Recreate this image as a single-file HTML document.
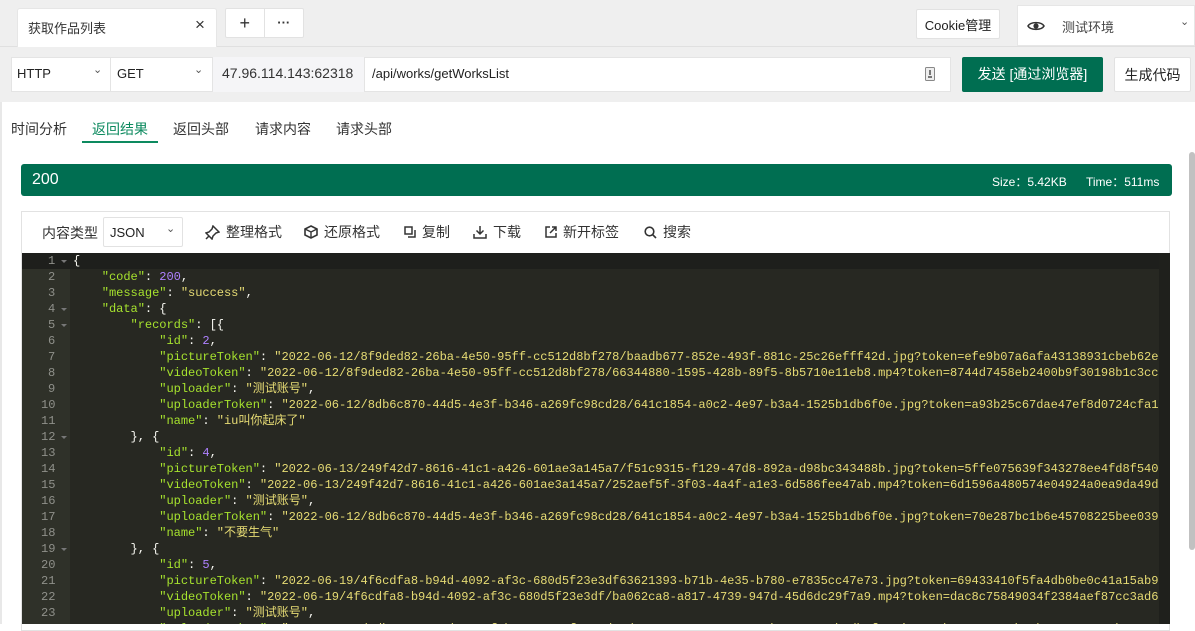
<!DOCTYPE html>
<html><head><meta charset="utf-8"><style>
*{box-sizing:border-box;margin:0;padding:0}
body{width:1195px;height:624px;overflow:hidden;background:#fff;font-family:"Liberation Sans","Noto Sans CJK SC",sans-serif;font-size:13px;color:#333;position:relative}
.abs{position:absolute}
.top{left:0;top:0;width:1195px;height:102px;background:#efefef}
.box{background:#fff;border:1px solid #e2e2e2;border-radius:2px;display:flex;align-items:center}
.code{left:22px;top:253px;width:1148px;height:371px;background:#272822;overflow:hidden;font-family:"Liberation Mono","Noto Sans CJK SC",monospace;font-size:12.08px}
.gut{position:absolute;left:0;top:0;width:48px;height:100%;background:#2f3129}
.ln{position:absolute;left:0;width:48px;height:16px;line-height:16px;color:#8f908a;text-align:left;padding-left:26px}
.ln.f::after{content:"";position:absolute;left:39px;top:7px;border:3px solid transparent;border-top:3px solid #777}
.tx{position:absolute;left:51px;height:16px;line-height:16px;white-space:pre;color:#f8f8f2;letter-spacing:-0.06px}
.k{color:#a6e22e}.s{color:#e6db74}.n{color:#ae81ff}
.tb{top:119px;font-size:14px;color:#333}
.ti{display:flex;align-items:center;gap:6px;font-size:14px;color:#333}
</style></head><body>
<div class="abs top"></div>
<div class="abs" style="left:0;top:46px;width:1195px;height:1px;background:#e0e0e0"></div>
<div class="abs" style="left:17px;top:8px;width:200px;height:39px;background:#fff;border:1px solid #e6e6e6;border-bottom:none;border-radius:3px 3px 0 0"></div>
<div class="abs" style="left:28px;top:18px;font-size:13px;color:#333">获取作品列表</div>
<div class="abs" style="left:195px;top:15px;font-size:17px;color:#333">×</div>
<div class="abs box" style="left:225px;top:8px;width:79px;height:30px"><div style="width:39px;text-align:center;font-size:18px;border-right:1px solid #e2e2e2;line-height:28px">+</div><div style="width:39px;text-align:center;font-weight:bold;line-height:24px">···</div></div>
<div class="abs box" style="left:916px;top:9px;width:84px;height:30px;justify-content:center;font-size:13px;color:#222">Cookie管理</div>
<div class="abs" style="left:1017px;top:5px;width:178px;height:41px;background:#fff;border:1px solid #e6e6e6"></div>
<svg class="abs" style="left:1027px;top:19px" width="18" height="14" viewBox="0 0 18 14"><path d="M1 7C3.5 2.5 14.5 2.5 17 7C14.5 11.5 3.5 11.5 1 7Z" fill="none" stroke="#333" stroke-width="1.6"/><circle cx="9" cy="7" r="2.6" fill="#333"/></svg>
<div class="abs" style="left:1062px;top:17px;font-size:13px;color:#444">测试环境</div>
<div class="abs" style="left:1180px;top:15px;font-size:11px;color:#555">⌄</div>
<div class="abs" style="left:11px;top:57px;width:940px;height:35px;background:#fff;border:1px solid #e4e4e4"></div>
<div class="abs" style="left:110px;top:57px;width:1px;height:35px;background:#e4e4e4"></div>
<div class="abs" style="left:212px;top:57px;width:153px;height:35px;background:#f5f5f7;border-left:1px solid #e4e4e4;border-right:1px solid #e4e4e4"></div>
<div class="abs" style="left:17px;top:66px;font-size:13px;color:#222">HTTP</div>
<div class="abs" style="left:93px;top:63px;font-size:11px;color:#555">⌄</div>
<div class="abs" style="left:117px;top:66px;font-size:13px;color:#222">GET</div>
<div class="abs" style="left:194px;top:63px;font-size:11px;color:#555">⌄</div>
<div class="abs" style="left:222px;top:65px;font-size:14px;color:#333">47.96.114.143:62318</div>
<div class="abs" style="left:372px;top:66px;font-size:13px;color:#222">/api/works/getWorksList</div>
<svg class="abs" style="left:925px;top:67px" width="10" height="14" viewBox="0 0 10 14"><rect x="0.5" y="0.5" width="9" height="13" rx="1" fill="#eee" stroke="#888"/><rect x="4" y="3" width="2" height="5" fill="#777"/><rect x="3" y="9" width="4" height="2" fill="#777"/></svg>
<div class="abs" style="left:962px;top:57px;width:141px;height:35px;background:#006e51;border-radius:2px;color:#fff;font-size:14px;line-height:35px;text-align:center">发送 [通过浏览器]</div>
<div class="abs box" style="left:1114px;top:57px;width:77px;height:35px;justify-content:center;font-size:14px;color:#222">生成代码</div>
<div class="abs" style="left:0;top:102px;width:2px;height:522px;background:#e8e8e8"></div>
<div class="abs tb" style="left:11px">时间分析</div>
<div class="abs tb" style="left:92px;color:#0d8a5f">返回结果</div>
<div class="abs" style="left:82px;top:141px;width:76px;height:2px;background:#0d8a5f"></div>
<div class="abs tb" style="left:173px">返回头部</div>
<div class="abs tb" style="left:255px">请求内容</div>
<div class="abs tb" style="left:336px">请求头部</div>
<div class="abs" style="left:1189px;top:152px;width:6px;height:398px;background:#c1c1c1;border-radius:3px"></div>
<div class="abs" style="left:21px;top:164px;width:1151px;height:32px;background:#006e51;border-radius:3px"></div>
<div class="abs" style="left:32px;top:171px;color:#fff;font-size:16px">200</div>
<div class="abs" style="left:992px;top:173px;color:#fff;font-size:12px">Size：5.42KB</div>
<div class="abs" style="left:1086px;top:173px;color:#fff;font-size:12px">Time：511ms</div>
<div class="abs" style="left:21px;top:211px;width:1149px;height:420px;border:1px solid #e2e2e2;background:#fff"></div>
<div class="abs" style="left:42px;top:223px;font-size:14px;color:#333">内容类型</div>
<div class="abs box" style="left:103px;top:217px;width:80px;height:30px;padding-left:6px;font-size:13px;color:#222">JSON<span style="position:absolute;left:62px;top:4px;font-size:11px;color:#555">⌄</span></div>
<div class="abs ti" style="left:205px;top:222px"><svg width="15" height="15" viewBox="0 0 15 15"><path d="M8 1L14 7L11 8L8 11L7 14L1 8L4 7L7 4Z" fill="none" stroke="#333" stroke-width="1.5"/><path d="M4 11L1 14" stroke="#333" stroke-width="1.5"/></svg>整理格式</div>
<div class="abs ti" style="left:304px;top:222px"><svg width="14" height="14" viewBox="0 0 14 14"><path d="M7 1L13 4V10L7 13L1 10V4Z" fill="none" stroke="#333" stroke-width="1.6"/><path d="M1 4L7 7L13 4M7 7V13" fill="none" stroke="#333" stroke-width="1.4"/></svg>还原格式</div>
<div class="abs ti" style="left:404px;top:222px"><svg width="12" height="12" viewBox="0 0 12 12"><rect x="1" y="1" width="7" height="7" fill="none" stroke="#333" stroke-width="1.5"/><path d="M4 11H11V4" fill="none" stroke="#333" stroke-width="1.5"/></svg>复制</div>
<div class="abs ti" style="left:473px;top:222px"><svg width="14" height="14" viewBox="0 0 14 14"><path d="M7 1V9M3.5 5.5L7 9L10.5 5.5M1 9V13H13V9" fill="none" stroke="#333" stroke-width="1.5"/></svg>下载</div>
<div class="abs ti" style="left:545px;top:222px"><svg width="12" height="12" viewBox="0 0 12 12"><path d="M5 1H1V11H11V7M7 1H11V5M11 1L5 7" fill="none" stroke="#333" stroke-width="1.5"/></svg>新开标签</div>
<div class="abs ti" style="left:644px;top:222px"><svg width="13" height="13" viewBox="0 0 13 13"><circle cx="5.5" cy="5.5" r="4.3" fill="none" stroke="#333" stroke-width="1.6"/><path d="M8.7 8.7L12 12" stroke="#333" stroke-width="1.6"/></svg>搜索</div>
<div class="abs code">
<div class="gut"></div>
<div style="position:absolute;left:0;top:0;width:1148px;height:16px;background:#1e1f1c"></div>
<div style="position:absolute;right:0;top:0;width:11px;height:371px;background:#1f201c"></div>
<div class="ln f" style="top:0">1</div><div class="ln" style="top:16px">2</div><div class="ln" style="top:32px">3</div><div class="ln f" style="top:48px">4</div><div class="ln f" style="top:64px">5</div><div class="ln" style="top:80px">6</div><div class="ln" style="top:96px">7</div><div class="ln" style="top:112px">8</div><div class="ln" style="top:128px">9</div>
<div class="ln" style="top:144px;padding-left:19px">10</div><div class="ln" style="top:160px;padding-left:19px">11</div><div class="ln f" style="top:176px;padding-left:19px">12</div><div class="ln" style="top:192px;padding-left:19px">13</div><div class="ln" style="top:208px;padding-left:19px">14</div><div class="ln" style="top:224px;padding-left:19px">15</div><div class="ln" style="top:240px;padding-left:19px">16</div><div class="ln" style="top:256px;padding-left:19px">17</div><div class="ln" style="top:272px;padding-left:19px">18</div><div class="ln f" style="top:288px;padding-left:19px">19</div><div class="ln" style="top:304px;padding-left:19px">20</div><div class="ln" style="top:320px;padding-left:19px">21</div><div class="ln" style="top:336px;padding-left:19px">22</div><div class="ln" style="top:352px;padding-left:19px">23</div><div class="ln" style="top:368px;padding-left:19px">24</div>
<div style="position:absolute;left:51px;top:0;width:1086px;height:371px;overflow:hidden">
<div class="tx" style="left:0;top:0">{</div>
<div class="tx" style="left:0;top:16px">    <span class="k">"code"</span>: <span class="n">200</span>,</div>
<div class="tx" style="left:0;top:32px">    <span class="k">"message"</span>: <span class="s">"success"</span>,</div>
<div class="tx" style="left:0;top:48px">    <span class="k">"data"</span>: {</div>
<div class="tx" style="left:0;top:64px">        <span class="k">"records"</span>: [{</div>
<div class="tx" style="left:0;top:80px">            <span class="k">"id"</span>: <span class="n">2</span>,</div>
<div class="tx" style="left:0;top:96px">            <span class="k">"pictureToken"</span>: <span class="s">"2022-06-12/8f9ded82-26ba-4e50-95ff-cc512d8bf278/baadb677-852e-493f-881c-25c26efff42d.jpg?token=efe9b07a6afa43138931cbeb62e8a1"</span></div>
<div class="tx" style="left:0;top:112px">            <span class="k">"videoToken"</span>: <span class="s">"2022-06-12/8f9ded82-26ba-4e50-95ff-cc512d8bf278/66344880-1595-428b-89f5-8b5710e11eb8.mp4?token=8744d7458eb2400b9f30198b1c3cc1a"</span></div>
<div class="tx" style="left:0;top:128px">            <span class="k">"uploader"</span>: <span class="s">"测试账号"</span>,</div>
<div class="tx" style="left:0;top:144px">            <span class="k">"uploaderToken"</span>: <span class="s">"2022-06-12/8db6c870-44d5-4e3f-b346-a269fc98cd28/641c1854-a0c2-4e97-b3a4-1525b1db6f0e.jpg?token=a93b25c67dae47ef8d0724cfa1b2c"</span></div>
<div class="tx" style="left:0;top:160px">            <span class="k">"name"</span>: <span class="s">"iu叫你起床了"</span></div>
<div class="tx" style="left:0;top:176px">        }, {</div>
<div class="tx" style="left:0;top:192px">            <span class="k">"id"</span>: <span class="n">4</span>,</div>
<div class="tx" style="left:0;top:208px">            <span class="k">"pictureToken"</span>: <span class="s">"2022-06-13/249f42d7-8616-41c1-a426-601ae3a145a7/f51c9315-f129-47d8-892a-d98bc343488b.jpg?token=5ffe075639f343278ee4fd8f5401a"</span></div>
<div class="tx" style="left:0;top:224px">            <span class="k">"videoToken"</span>: <span class="s">"2022-06-13/249f42d7-8616-41c1-a426-601ae3a145a7/252aef5f-3f03-4a4f-a1e3-6d586fee47ab.mp4?token=6d1596a480574e04924a0ea9da49d1a"</span></div>
<div class="tx" style="left:0;top:240px">            <span class="k">"uploader"</span>: <span class="s">"测试账号"</span>,</div>
<div class="tx" style="left:0;top:256px">            <span class="k">"uploaderToken"</span>: <span class="s">"2022-06-12/8db6c870-44d5-4e3f-b346-a269fc98cd28/641c1854-a0c2-4e97-b3a4-1525b1db6f0e.jpg?token=70e287bc1b6e45708225bee0391a2"</span></div>
<div class="tx" style="left:0;top:272px">            <span class="k">"name"</span>: <span class="s">"不要生气"</span></div>
<div class="tx" style="left:0;top:288px">        }, {</div>
<div class="tx" style="left:0;top:304px">            <span class="k">"id"</span>: <span class="n">5</span>,</div>
<div class="tx" style="left:0;top:320px">            <span class="k">"pictureToken"</span>: <span class="s">"2022-06-19/4f6cdfa8-b94d-4092-af3c-680d5f23e3df63621393-b71b-4e35-b780-e7835cc47e73.jpg?token=69433410f5fa4db0be0c41a15ab91a"</span></div>
<div class="tx" style="left:0;top:336px">            <span class="k">"videoToken"</span>: <span class="s">"2022-06-19/4f6cdfa8-b94d-4092-af3c-680d5f23e3df/ba062ca8-a817-4739-947d-45d6dc29f7a9.mp4?token=dac8c75849034f2384aef87cc3ad61a"</span></div>
<div class="tx" style="left:0;top:352px">            <span class="k">"uploader"</span>: <span class="s">"测试账号"</span>,</div>
<div class="tx" style="left:0;top:368px">            <span class="k">"uploaderToken"</span>: <span class="s">"2022-06-12/8db6c870-44d5-4e3f-b346-a269fc98cd28/641c1854-a0c2-4e97-b3a4-1525b1db6f0e.jpg?token=70e287bc1b6e45708225bee0391a2"</span></div>
</div>
</div>
</body></html>
